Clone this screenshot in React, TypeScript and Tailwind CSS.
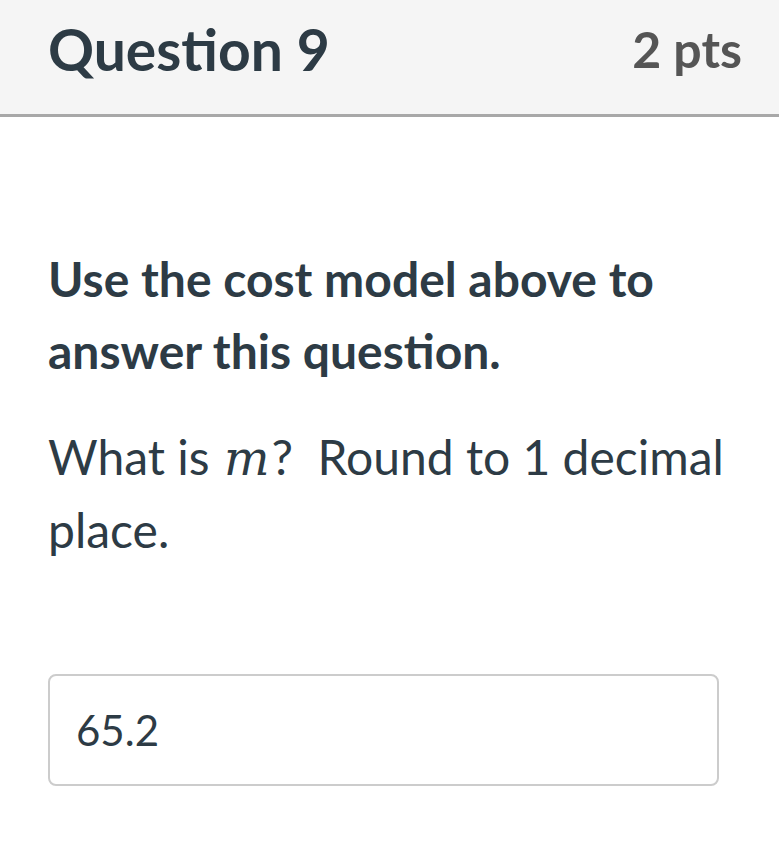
import React from 'react';

export default function App() {
  return (
    <div className="min-h-[856px] w-[779px] bg-white font-['Lato','Noto_Sans',sans-serif] text-[#2d3b45]">
      <div className="flex h-[117px] items-center justify-between border-b-[3px] border-[#a8a8a8] bg-[#f5f5f5] pb-[16px] pl-[48px] pr-[37px]">
        <h2 className="text-[57px] font-bold leading-none">Question 9</h2>
        <span className="text-[50px] font-bold leading-none text-[#555555]">2 pts</span>
      </div>

      <div className="px-[48px] pt-[126px]">
        <p className="mb-[34px] text-[48px] font-bold leading-[72px]">
          Use the cost model above to answer this question.
        </p>
        <p className="text-[48px] leading-[72px]">
          What is{' '}
          <span className="ml-[2px] mr-[2px] font-['DejaVu_Serif',serif] text-[48px] italic">m</span>?&nbsp; Round to 1 decimal place.
        </p>

        <div className="mt-[108px] flex h-[112px] w-[671px] items-center rounded-[8px] border-2 border-[#cccccc] px-[26px]">
          <span className="text-[42px] leading-none">65.2</span>
        </div>
      </div>
    </div>
  );
}
